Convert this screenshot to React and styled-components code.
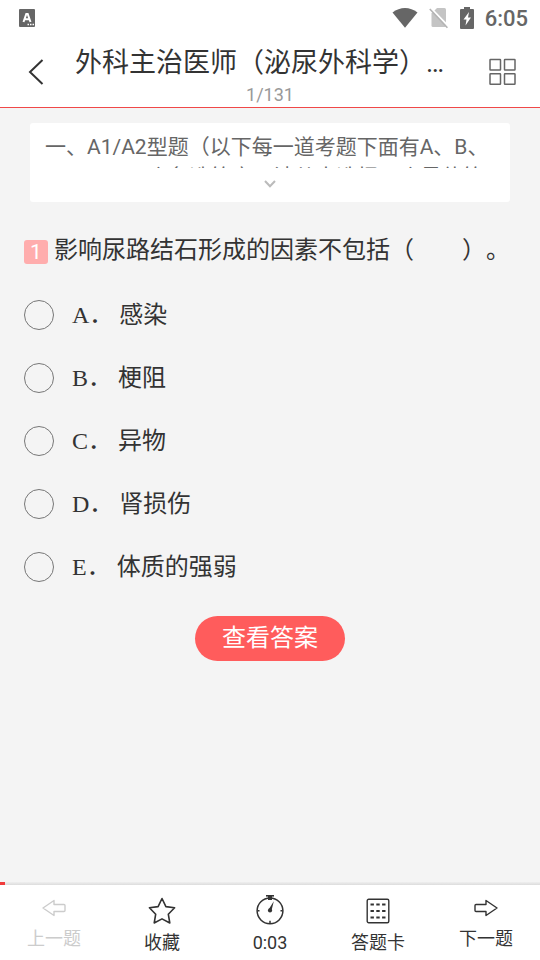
import React, { useState } from "react";
import styled, { createGlobalStyle } from "styled-components";

const options = [
  { key: "A", text: "感染" },
  { key: "B", text: "梗阻" },
  { key: "C", text: "异物" },
  { key: "D", text: "肾损伤" },
  { key: "E", text: "体质的强弱" },
];

function StatusBar() {
  return (
    <Status>
      <svg width="16" height="18" viewBox="0 0 16 18">
        <rect width="16" height="18" rx="1" fill="#666" />
        <path
          d="M4.5 13 L7.3 5 H8.7 L11.5 13 M5.6 10.3 H10.4"
          fill="none"
          stroke="#fff"
          strokeWidth="2"
        />
        <path d="M8.5 15.5h1.5M11 15.5h1.5M13.5 15.5h1.5" stroke="#fff" strokeWidth="1.4" />
      </svg>
      <StatusIcons>
        <svg width="26" height="22" viewBox="0 0 26 22">
          <path d="M0.5 5.5 C8 -0.6 18 -0.6 25.5 5.5 L13 20.8 Z" fill="#666" />
        </svg>
        <svg width="20" height="22" viewBox="0 0 20 22">
          <path d="M8 1 H15.5 Q17 1 17 2.5 V18.5 Q17 20 15.5 20 H4 Q2.5 20 2.5 18.5 V6.5 Z" fill="#c4c4c4" />
          <path d="M1.6 1 L20 20" stroke="#fff" strokeWidth="2" />
          <path d="M0.8 2 L18.4 20.8" stroke="#b4b4b4" strokeWidth="1.6" />
        </svg>
        <svg width="14" height="22" viewBox="0 0 14 22">
          <path d="M4 0 H10 V2 H13 Q14 2 14 3 V21 Q14 22 13 22 H1 Q0 22 0 21 V3 Q0 2 1 2 H4 Z" fill="#666" />
          <path d="M9 5 L3.5 12.5 H6.5 L5.5 18.5 L11 10.5 H8 Z" fill="#fff" />
        </svg>
        <Clock>6:05</Clock>
      </StatusIcons>
    </Status>
  );
}

function ArrowIcon({ flip }) {
  return (
    <svg width="24" height="18" viewBox="0 0 24 18">
      <path
        d="M1 9 L12 1.5 V5.5 H22 Q23 5.5 23 6.5 V11.5 Q23 12.5 22 12.5 H12 V16.5 Z"
        transform={flip ? "translate(24 0) scale(-1 1)" : undefined}
        fill="none"
        stroke="currentColor"
        strokeWidth="1.4"
        strokeLinejoin="round"
      />
    </svg>
  );
}

function StarIcon() {
  return (
    <svg width="28" height="28" viewBox="0 0 28 28">
      <path
        d="M14 1.5 L17.9 9.6 L26.6 10.8 L20.3 17.2 L21.8 26 L14 21.9 L6.2 26 L7.7 17.2 L1.4 10.8 L10.1 9.6 Z"
        fill="none"
        stroke="currentColor"
        strokeWidth="1.6"
        strokeLinejoin="round"
      />
    </svg>
  );
}

function TimerIcon() {
  return (
    <svg width="28" height="30" viewBox="0 0 28 30">
      <circle cx="14" cy="15.8" r="12.9" fill="none" stroke="currentColor" strokeWidth="1.5" />
      <path d="M10 0.8 H18" stroke="currentColor" strokeWidth="1.6" />
      <path d="M14 1 V5" stroke="currentColor" strokeWidth="4" />
      <path d="M14 25.8 V28.5 M1.5 15.8 H3.5 M24.5 15.8 H26.5" stroke="currentColor" strokeWidth="1.5" />
      <path d="M12.6 14.5 L17.8 6.2 L15.4 16 Z" fill="currentColor" />
      <circle cx="14" cy="15.4" r="2.1" fill="currentColor" />
    </svg>
  );
}

function SheetIcon() {
  return (
    <svg width="24" height="27" viewBox="0 0 24 27">
      <rect x="1.2" y="1.2" width="21.6" height="23.6" rx="1.5" fill="none" stroke="currentColor" strokeWidth="1.4" />
      <path
        d="M4.5 6.5h3.4M10.3 6.5h3.4M16.1 6.5h3.4M4.5 13h3.4M10.3 13h3.4M16.1 13h3.4M4.5 19.5h3.4M10.3 19.5h3.4M16.1 19.5h3.4"
        stroke="currentColor"
        strokeWidth="2"
      />
    </svg>
  );
}

function App() {
  const [answer, setAnswer] = useState("");

  return (
    <Page>
      <GlobalStyle />
      <StatusBar />
      <Header>
        <IconButton aria-label="返回">
          <svg width="20" height="26" viewBox="0 0 20 26">
            <path d="M14.5 1 L2 13 L14.5 25" fill="none" stroke="#333" strokeWidth="2" />
          </svg>
        </IconButton>
        <Heading>
          <Title>外科主治医师（泌尿外科学）…</Title>
          <Count>1/131</Count>
        </Heading>
        <IconButton aria-label="菜单">
          <svg width="28" height="28" viewBox="0 0 28 28">
            <g fill="none" stroke="#666" strokeWidth="1.5">
              <rect x="1" y="1.5" width="10.5" height="10.5" rx="0.5" />
              <rect x="15.5" y="1.5" width="10.5" height="10.5" rx="0.5" />
              <rect x="1" y="15.7" width="10.5" height="10.5" rx="0.5" />
              <rect x="15.5" y="15.7" width="10.5" height="10.5" rx="0.5" />
            </g>
          </svg>
        </IconButton>
      </Header>

      <Main>
        <Intro>
          <IntroText>
            一、A1/A2型题（以下每一道考题下面有A、B、C、D、E五个备选答案，请从中选择一个最佳答案）
          </IntroText>
          <ExpandButton aria-label="展开">
            <svg width="12" height="8" viewBox="0 0 12 8">
              <path d="M1 1 L6 6.3 L11 1" fill="none" stroke="#bbb" strokeWidth="2" />
            </svg>
          </ExpandButton>
        </Intro>

        <Question>
          <Badge>1</Badge>
          <QuestionText>影响尿路结石形成的因素不包括（　　）。</QuestionText>
        </Question>

        <Options>
          {options.map((option) => (
            <Option key={option.key}>
              <Radio
                type="radio"
                name="answer"
                value={option.key}
                checked={answer === option.key}
                onChange={() => setAnswer(option.key)}
              />
              <OptionText>
                {option.key}． {option.text}
              </OptionText>
            </Option>
          ))}
        </Options>

        <AnswerButton>查看答案</AnswerButton>
      </Main>

      <Progress>
        <ProgressBar />
      </Progress>
      <Footer>
        <Tab disabled $short>
          <ArrowIcon />
          上一题
        </Tab>
        <Tab>
          <TabIcon>
            <StarIcon />
          </TabIcon>
          收藏
        </Tab>
        <Tab>
          <TabIcon>
            <TimerIcon />
          </TabIcon>
          0:03
        </Tab>
        <Tab>
          <TabIcon>
            <SheetIcon />
          </TabIcon>
          答题卡
        </Tab>
        <Tab $short>
          <ArrowIcon flip />
          下一题
        </Tab>
      </Footer>
    </Page>
  );
}

const GlobalStyle = createGlobalStyle`
  * {
    box-sizing: border-box;
  }

  body {
    margin: 0;
    background-color: #f4f4f4;
    color: #333;
    font-family: Roboto, "Noto Sans CJK SC", sans-serif;
    text-spacing-trim: space-all;
  }

  button {
    border: none;
    padding: 0;
    background: none;
    color: inherit;
    font-family: inherit;
    cursor: pointer;
  }

  svg {
    display: block;
    flex-shrink: 0;
  }
`;

const Page = styled.div`
  min-height: 100vh;
  display: flex;
  flex-direction: column;
`;

const Status = styled.div`
  height: 36px;
  padding: 0 12px 0 19px;
  display: flex;
  align-items: center;
  justify-content: space-between;
  background-color: #fff;
`;

const StatusIcons = styled.div`
  display: flex;
  align-items: center;
  gap: 11px;
`;

const Clock = styled.span`
  color: #666;
  font-size: 22px;
  font-weight: 500;
  line-height: 36px;
  padding-top: 2px;
`;

const Header = styled.header`
  height: 72px;
  display: flex;
  align-items: center;
  background-color: #fff;
  border-bottom: 1px solid #f04848;
`;

const IconButton = styled.button`
  width: 75px;
  height: 71px;
  flex-shrink: 0;
  display: flex;
  align-items: center;
  justify-content: center;
`;

const Heading = styled.div`
  flex: 1;
  min-width: 0;
  padding-top: 7px;
  text-align: center;
`;

const Title = styled.h1`
  margin: 0;
  font-size: 27px;
  font-weight: 400;
  line-height: 40px;
  text-align: left;
  white-space: nowrap;
  overflow: hidden;
  text-overflow: ellipsis;
`;

const Count = styled.div`
  color: #999;
  font-size: 18px;
  line-height: 24px;
`;

const Main = styled.main`
  flex: 1;
  padding: 15px 24px;
  display: flex;
  flex-direction: column;
`;

const Intro = styled.section`
  margin: 0 6px;
  padding: 9px 15px 0;
  border-radius: 3px;
  background-color: #fff;
`;

const IntroText = styled.p`
  height: 36px;
  margin: 0;
  overflow: hidden;
  color: #666;
  font-size: 21px;
  line-height: 30px;
`;

const ExpandButton = styled.button`
  width: 100%;
  height: 34px;
  padding-bottom: 2px;
  display: flex;
  align-items: center;
  justify-content: center;
`;

const Question = styled.div`
  margin-top: 30px;
  display: flex;
  gap: 6px;
`;

const Badge = styled.span`
  width: 24px;
  height: 24px;
  margin-top: 8px;
  flex-shrink: 0;
  border-radius: 3px;
  background-color: #ffadad;
  color: #fff;
  font-size: 21px;
  line-height: 24px;
  text-align: center;
`;

const QuestionText = styled.h2`
  margin: 0;
  font-size: 24px;
  font-weight: 400;
  line-height: 36px;
`;

const Options = styled.div`
  margin-top: 29px;
  display: flex;
  flex-direction: column;
  gap: 27px;
`;

const Option = styled.label`
  display: flex;
  align-items: center;
  gap: 18px;
  cursor: pointer;
`;

const Radio = styled.input`
  appearance: none;
  width: 30px;
  height: 30px;
  margin: 0;
  flex-shrink: 0;
  border: 1px solid #777;
  border-radius: 50%;

  &:checked {
    border: 9px solid #ff5c5c;
  }
`;

const OptionText = styled.span`
  font-family: "Liberation Serif", "Noto Sans CJK SC", serif;
  font-size: 24px;
  line-height: 36px;
`;

const AnswerButton = styled.button`
  width: 150px;
  height: 45px;
  margin: 31px auto 0;
  border-radius: 23px;
  && {
    background-color: #ff5c5c;
    color: #fff;
  }
  font-size: 24px;
  line-height: 45px;
`;

const Progress = styled.div`
  height: 3px;
  background: linear-gradient(#efefef, #dcdcdc);
`;

const ProgressBar = styled.div`
  width: 1%;
  height: 3px;
  background-color: #f03c3c;
`;

const Footer = styled.nav`
  height: 75px;
  display: flex;
  background-color: #fff;
`;

const Tab = styled.button`
  flex: 1;
  display: flex;
  flex-direction: column;
  align-items: center;
  justify-content: space-between;
  && {
    padding: ${(props) => (props.$short ? "14px 0 9px" : "10px 0 5px")};
    color: ${(props) => (props.disabled ? "#ccc" : "#333")};
  }
  font-size: 18px;
  line-height: 24px;
`;

const TabIcon = styled.span`
  height: 30px;
  display: flex;
  align-items: flex-end;
`;

export default App;
